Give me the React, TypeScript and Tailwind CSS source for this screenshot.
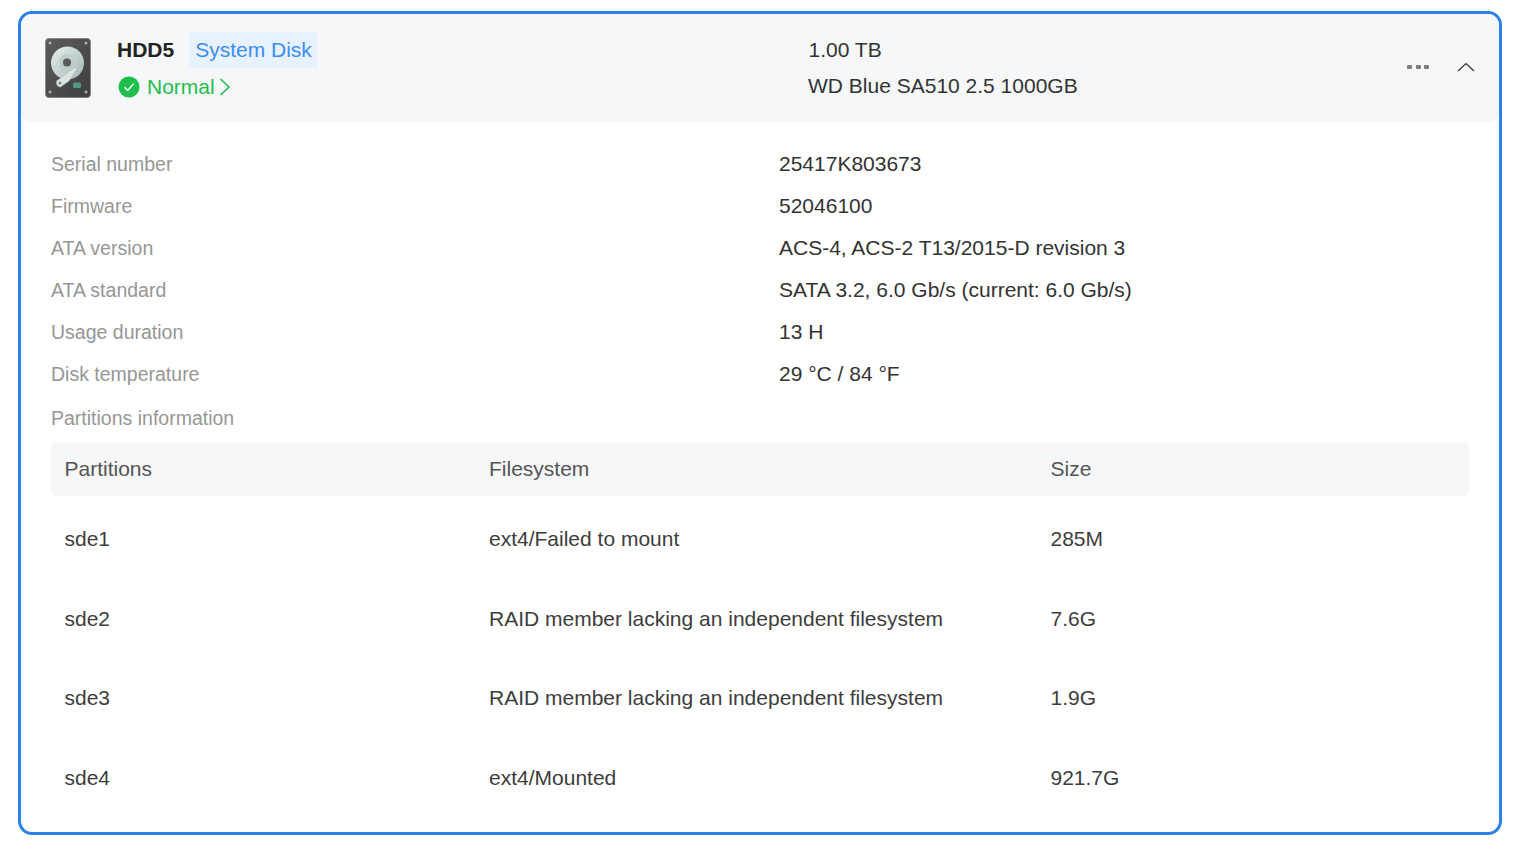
const details = [
	["Serial number", "25417K803673"],
	["Firmware", "52046100"],
	["ATA version", "ACS-4, ACS-2 T13/2015-D revision 3"],
	["ATA standard", "SATA 3.2, 6.0 Gb/s (current: 6.0 Gb/s)"],
	["Usage duration", "13 H"],
	["Disk temperature", "29 °C / 84 °F"],
];

const partitions = [
	["sde1", "ext4/Failed to mount", "285M", "h-[80px]"],
	["sde2", "RAID member lacking an independent filesystem", "7.6G", "h-[79px]"],
	["sde3", "RAID member lacking an independent filesystem", "1.9G", "h-[80px]"],
	["sde4", "ext4/Mounted", "921.7G", "h-[80px]"],
];

function DiskIcon() {
	return (
		<svg width="46" height="60" viewBox="0 0 46 60">
			<defs>
				<linearGradient id="case" x1="0" y1="0" x2="1" y2="1">
					<stop offset="0" stopColor="#5c5c5c" />
					<stop offset="1" stopColor="#3e3e3e" />
				</linearGradient>
				<linearGradient id="platter" x1="0" y1="0" x2="1" y2="1">
					<stop offset="0" stopColor="#e6edeb" />
					<stop offset="1" stopColor="#a3b9b7" />
				</linearGradient>
			</defs>
			<rect x="0.3" y="0.3" width="45.4" height="59.4" rx="4" fill="url(#case)" stroke="#999" strokeWidth="0.6" />
			<circle cx="5" cy="5" r="1.5" fill="#b0b0b0" />
			<circle cx="41" cy="5" r="1.5" fill="#b0b0b0" />
			<circle cx="5" cy="54" r="1.5" fill="#b0b0b0" />
			<circle cx="41" cy="54" r="1.5" fill="#b0b0b0" />
			<circle cx="22.5" cy="25" r="16.5" fill="url(#platter)" />
			<circle cx="22" cy="24.5" r="8" fill="#bccdca" />
			<circle cx="22" cy="24.5" r="4" fill="#5a5a5a" />
			<path d="M11.5 43 L30 29.5 L31.5 31 L24 43 L15.5 49 Q10.5 48.5 11.5 43 Z" fill="#dbe5e3" stroke="#a8b8b6" strokeWidth="0.4" />
			<circle cx="15" cy="45" r="1.6" fill="#77888a" />
			<rect x="28" y="44.5" width="8" height="5.5" rx="1.5" fill="#4f9a84" />
		</svg>
	);
}

export default function App() {
	return (
		<div className="w-[1513px] h-[856px] bg-white pt-[11px] pl-[18px] font-['Liberation_Sans',Arial,sans-serif]">
			<div className="w-[1484px] h-[824px] border-[3px] border-[#2b82e6] rounded-[14px] overflow-hidden">
				<header className="h-[108px] bg-[#f6f7f9] rounded-[10px] flex items-center">
					<div className="ml-[24px] w-[48px] mt-[-1px]">
						<DiskIcon />
					</div>
					<div className="ml-[24px] w-[691px]">
						<div className="flex items-center h-[36px]">
							<span className="text-[21px] leading-[36px] font-bold text-[#222]">HDD5</span>
							<span className="ml-[15px] px-[6px] h-[36px] leading-[36px] bg-[#e8f2fe] text-[#3b8df2] text-[21px] rounded-[2px]">System Disk</span>
						</div>
						<div className="flex items-center h-[36px] mt-[1px]">
							<svg width="22" height="22" viewBox="0 0 22 22" className="ml-[1px]">
								<circle cx="11" cy="11" r="10.5" fill="#1fbf4d" />
								<path d="M6.5 11.2 L9.8 14.4 L15.6 7.8" fill="none" stroke="#fff" strokeWidth="1.5" />
							</svg>
							<span className="ml-[7px] text-[21px] leading-[36px] text-[#1fbf4d]">Normal</span>
							<svg width="12" height="20" viewBox="0 0 12 20" className="ml-[4px]">
								<path d="M1.5 2 L10 10 L1.5 18" fill="none" stroke="#1fbf4d" strokeWidth="1.6" />
							</svg>
						</div>
					</div>
					<div className="flex-1 text-[21px] leading-[36px] text-[#333]">
						<div className="ml-[0.5px]">1.00 TB</div>
						<div>WD Blue SA510 2.5 1000GB</div>
					</div>
					<div className="flex items-center gap-[3.5px] mr-[28px] mt-[-3px]">
						<span className="w-[5px] h-[4px] bg-[#7d7d7d] rounded-[1px]" />
						<span className="w-[5px] h-[4px] bg-[#7d7d7d] rounded-[1px]" />
						<span className="w-[5px] h-[4px] bg-[#7d7d7d] rounded-[1px]" />
					</div>
					<svg width="18" height="10" viewBox="0 0 18 10" className="mr-[24px] mt-[-2px]">
						<path d="M1 9 L9 1.5 L17 9" fill="none" stroke="#333" strokeWidth="1.2" />
					</svg>
				</header>
				<div className="pl-[30px] pr-[30px] pt-[21px]">
					{details.map(([label, value]) => (
						<div key={label} className="flex h-[42px] items-center">
							<span className="w-[728px] pt-[2px] text-[19.5px] text-[#969696]">{label}</span>
							<span className="text-[21px] text-[#333]">{value}</span>
						</div>
					))}
					<div className="h-[47px] flex items-center text-[19.5px] text-[#969696]">Partitions information</div>
					<div className="h-[54px] bg-[#f6f7f9] rounded-[6px] flex items-center text-[21px] text-[#555]">
						<span className="w-[438px] pl-[13.5px]">Partitions</span>
						<span className="w-[561.5px]">Filesystem</span>
						<span>Size</span>
					</div>
					<div className="mt-[3px]">
						{partitions.map(([name, fs, size, height]) => (
							<div key={name} className={`${height} flex items-center text-[21px] text-[#3d3d3d]`}>
								<span className="w-[438px] pl-[13.5px]">{name}</span>
								<span className="w-[561.5px]">{fs}</span>
								<span>{size}</span>
							</div>
						))}
					</div>
				</div>
			</div>
		</div>
	);
}
